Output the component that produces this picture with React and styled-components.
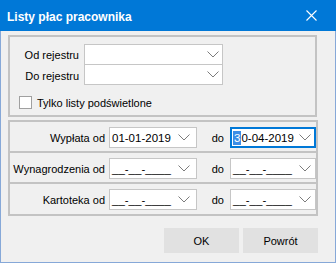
import React from "react";
import styled, { createGlobalStyle } from "styled-components";

const Global = createGlobalStyle`
  html, body { margin: 0; padding: 0; background: #f0f0f0; }
  body { font-family: "Liberation Sans", Arial, sans-serif; font-size: 11px; color: #000; }
  * { box-sizing: border-box; }
`;

const Window = styled.div`
  width: 336px;
  height: 263px;
  background: #f0f0f0;
  border: 1px solid #86a8d8;
  border-top: none;
  display: flex;
  flex-direction: column;
`;

const TitleBar = styled.div`
  height: 31px;
  margin: 0 -1px;
  background: #0078d7;
  color: #fff;
  display: flex;
  align-items: center;
  justify-content: space-between;
  padding-left: 7px;
`;

const Title = styled.span`
  font-weight: 700;
  font-size: 12px;
  padding-top: 2px;
`;

const CloseButton = styled.div`
  width: 46px;
  height: 31px;
  display: flex;
  align-items: center;
  justify-content: center;
  padding-right: 3px;
`;

const Body = styled.div`
  padding: 4px 17px 0 7px;
  display: flex;
  flex-direction: column;
`;

const GroupBox = styled.div`
  border: 2px solid #c3c3c3;
  margin-right: ${(p) => p.$mr || 0}px;
`;

const RegisterGrid = styled.div`
  display: grid;
  grid-template-columns: 74px 139px;
  padding-top: 7px;
`;

const Label = styled.div`
  padding-right: ${(p) => p.$pr || 5}px;
  display: flex;
  align-items: center;
  justify-content: flex-end;
  white-space: nowrap;
  height: ${(p) => p.$h || 20}px;
`;

const Field = styled.div`
  height: 21px;
  background: #fff;
  border: ${(p) => (p.$focused ? "2px solid #0078d7" : "1px solid #c6c6c6")};
  margin-top: ${(p) => (p.$stack ? -1 : 0)}px;
  display: flex;
  align-items: center;
  padding-left: ${(p) => (p.$focused ? 1 : 2)}px;
  white-space: nowrap;
  overflow: hidden;
`;

const FieldText = styled.span`
  flex: 1;
  line-height: 14px;
  font-size: 11.5px;
`;

const Selected = styled.span`
  background: #3d8ee6;
  color: #fff;
  display: inline-block;
  line-height: 14px;
  padding: 0 1px;
`;

const ChevronBox = styled.span`
  display: flex;
  align-items: center;
  margin-right: ${(p) => p.$mr}px;
`;

const CheckRow = styled.div`
  display: flex;
  align-items: center;
  margin: 10px 0 6px 9px;
  height: 13px;
`;

const CheckBox = styled.span`
  width: 13px;
  height: 13px;
  border: 1px solid #a0a0a0;
  background: #fff;
  margin-right: 5px;
`;

const DateGroup = styled.div`
  border: 2px solid #c3c3c3;
  margin-top: 3px;
`;

const DateRow = styled.div`
  display: grid;
  grid-template-columns: 99px 88px 33px 86px;
  height: ${(p) => p.$h}px;
  padding-top: 5px;
  border-top: ${(p) => (p.$first ? "none" : "2px solid #c3c3c3")};
`;

const ButtonRow = styled.div`
  display: flex;
  justify-content: flex-end;
  gap: 4px;
  margin-top: 12px;
`;

const Button = styled.div`
  width: 75px;
  height: 25px;
  background: #e1e1e1;
  display: flex;
  align-items: center;
  justify-content: center;
`;

const Chevron = () => (
  <svg width="12" height="7" viewBox="0 0 12 7">
    <polyline points="0.5,0.5 6,6 11.5,0.5" fill="none" stroke="#7c7c7c" strokeWidth="1" />
  </svg>
);

const CloseIcon = () => (
  <svg width="11" height="11" viewBox="0 0 11 11">
    <path d="M0.5 0.5 L10.5 10.5 M10.5 0.5 L0.5 10.5" stroke="#fff" strokeWidth="1.1" />
  </svg>
);

const Combo = ({ stack }) => (
  <Field $stack={stack}>
    <FieldText />
    <ChevronBox $mr={3}>
      <Chevron />
    </ChevronBox>
  </Field>
);

const DateField = ({ value, focused, mr }) => (
  <Field $focused={focused}>
    <FieldText>{value}</FieldText>
    <ChevronBox $mr={mr}>
      <Chevron />
    </ChevronBox>
  </Field>
);

const EMPTY = "__-__-____";

const rows = [
  { label: "Wypłata od", from: "01-01-2019", h: 29, first: true },
  { label: "Wynagrodzenia od", from: EMPTY, to: EMPTY, h: 31 },
  { label: "Kartoteka od", from: EMPTY, to: EMPTY, h: 32 },
];

export default function App() {
  return (
    <>
      <Global />
      <Window>
        <TitleBar>
          <Title>Listy płac pracownika</Title>
          <CloseButton>
            <CloseIcon />
          </CloseButton>
        </TitleBar>
        <Body>
          <GroupBox $mr={1}>
            <RegisterGrid>
              <Label $h={21}>Od rejestru</Label>
              <Combo />
              <Label $h={21}>Do rejestru</Label>
              <Combo stack />
            </RegisterGrid>
            <CheckRow>
              <CheckBox />
              <span>Tylko listy podświetlone</span>
            </CheckRow>
          </GroupBox>
          <DateGroup>
            {rows.map((r) => (
              <DateRow key={r.label} $h={r.h} $first={r.first}>
                <Label $pr={4} $h={21}>{r.label}</Label>
                <DateField value={r.from} mr={6} />
                <Label $pr={6} $h={21}>do</Label>
                {r.first ? (
                  <DateField
                    focused
                    mr={3}
                    value={
                      <>
                        <Selected>3</Selected>0-04-2019
                      </>
                    }
                  />
                ) : (
                  <DateField value={r.to} mr={4} />
                )}
              </DateRow>
            ))}
          </DateGroup>
          <ButtonRow>
            <Button>OK</Button>
            <Button>Powrót</Button>
          </ButtonRow>
        </Body>
      </Window>
    </>
  );
}
